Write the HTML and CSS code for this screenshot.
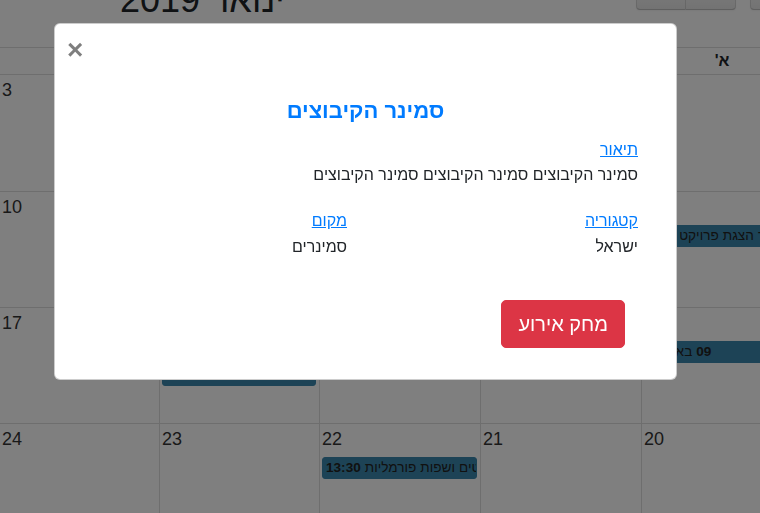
FILE: index.html
```html
<!DOCTYPE html>
<html lang="he">
<head>
<meta charset="utf-8">
<title>לוח אירועים</title>
<link rel="stylesheet" href="styles.css">
</head>
<body>
<div class="page">
  <div class="toolbar">
    <h2 class="cal-title">ינואר 2019</h2>
    <div class="btn-group">
      <button class="fc-btn fc-btn-first"></button><button class="fc-btn fc-btn-last"></button>
    </div>
    <button class="fc-btn fc-btn-single"></button>
  </div>
  <div class="grid">
    <div class="cell head"></div>
    <div class="cell head"></div>
    <div class="cell head"></div>
    <div class="cell head"></div>
    <div class="cell head last" dir="rtl">א'</div>

    <div class="cell"><div class="num">3</div></div>
    <div class="cell"><div class="num">2</div></div>
    <div class="cell"><div class="num">1</div></div>
    <div class="cell"><div class="num">31</div></div>
    <div class="cell last"><div class="num">30</div></div>

    <div class="cell"><div class="num">10</div></div>
    <div class="cell"><div class="num">9</div></div>
    <div class="cell"><div class="num">8</div></div>
    <div class="cell"><div class="num">7</div></div>
    <div class="cell last"><div class="num">6</div>
      <div class="ev"><b>9:30</b><span class="ev-t">פרויקט</span><span class="ev-t">הצגת</span><span class="ev-t">מועד</span></div>
    </div>

    <div class="cell"><div class="num">17</div></div>
    <div class="cell"><div class="num">16</div>
      <div class="ev"><b>10:00</b><span class="ev-t">סדנה</span></div>
      <div class="ev"><b>12:00</b><span class="ev-t">הרצאה</span></div>
    </div>
    <div class="cell"><div class="num">15</div></div>
    <div class="cell"><div class="num">14</div></div>
    <div class="cell last"><div class="num">13</div>
      <div class="ev ev-tight"><span class="ev-t">באנגלית</span><b>09</b></div>
    </div>

    <div class="cell"><div class="num">24</div></div>
    <div class="cell"><div class="num">23</div></div>
    <div class="cell"><div class="num">22</div>
      <div class="ev"><b>13:30</b><span class="ev-t">פורמליות</span><span class="ev-t">ושפות</span><span class="ev-t">אוטומטים</span></div>
    </div>
    <div class="cell"><div class="num">21</div></div>
    <div class="cell last"><div class="num">20</div></div>
  </div>
</div>

<div class="backdrop"></div>

<div class="modal" dir="rtl">
  <div class="modal-header">
    <button class="close" aria-label="סגור">×</button>
  </div>
  <div class="modal-body">
    <h4 class="modal-title">סמינר הקיבוצים</h4>
    <a class="label" href="#">תיאור</a>
    <p class="value desc">סמינר הקיבוצים סמינר הקיבוצים סמינר הקיבוצים</p>
    <div class="fields">
      <div class="field">
        <a class="label" href="#">קטגוריה</a>
        <div class="value">ישראל</div>
      </div>
      <div class="field">
        <a class="label" href="#">מקום</a>
        <div class="value">סמינרים</div>
      </div>
    </div>
  </div>
  <div class="modal-footer">
    <button class="btn-danger">מחק אירוע</button>
  </div>
</div>
</body>
</html>
```

FILE: styles.css
```css
* { box-sizing: border-box; }

html, body {
  margin: 0;
  padding: 0;
}

body {
  width: 760px;
  height: 513px;
  overflow: hidden;
  position: relative;
  background: #fff;
  color: #212529;
  font-family: "Liberation Sans", Arial, "DejaVu Sans", sans-serif;
}

.page {
  width: 802px;
}

/* calendar toolbar */
.toolbar {
  display: flex;
  align-items: flex-start;
  height: 69px;
  margin-top: -22px;
}

.cal-title {
  margin: 0 0 0 120px;
  font-size: 36px;
  font-weight: 400;
  line-height: 43px;
  color: #212529;
}

.btn-group {
  display: flex;
  margin-left: auto;
}

.fc-btn {
  display: block;
  width: 50px;
  height: 32px;
  margin: 0;
  padding: 0;
  background-color: #f5f5f5;
  background-image: linear-gradient(to bottom, #fff, #e6e6e6);
  border: 1px solid rgba(0, 0, 0, 0.1);
  border-bottom-color: rgba(0, 0, 0, 0.25);
  box-shadow: 0 1px 2px rgba(0, 0, 0, 0.05);
}

.fc-btn-first { border-radius: 0 0 0 4px; }
.fc-btn-last { border-radius: 0 0 4px 0; border-left: 0; }

.fc-btn-single {
  width: 52px;
  margin-left: 14px;
  border-radius: 0 0 0 4px;
}

/* month grid */
.grid {
  display: grid;
  grid-template-columns: 160px 160px 161px 161px 160px;
  grid-template-rows: 27px 117px 116px 116px 117px;
}

.cell {
  border-top: 1px solid #ddd;
  border-right: 1px solid #ddd;
  min-width: 0;
  overflow: hidden;
}

.cell.last { border-right: 0; }

.head {
  text-align: center;
  font-size: 16px;
  font-weight: 700;
  line-height: 26px;
  color: #212529;
}

.num {
  padding: 2px 0 0 2px;
  font-size: 18px;
  line-height: 27px;
  color: #333;
}

.ev {
  display: flex;
  direction: ltr;
  height: 22px;
  margin: 4px 3px 0 2px;
  padding: 0 3px;
  background: #3a87ad;
  border: 1px solid #3a87ad;
  border-radius: 3px;
  color: #222;
  font-size: 13.6px;
  line-height: 20px;
  white-space: nowrap;
  overflow: hidden;
}

.ev + .ev { margin-top: 1px; }

.ev-tight { padding-left: 0; }

.ev b {
  flex: none;
  margin-right: 4px;
}

.ev-t {
  flex: none;
  margin-right: 4px;
}

/* modal */
.backdrop {
  position: fixed;
  inset: 0;
  background: rgba(0, 0, 0, 0.5);
}

.modal {
  position: absolute;
  left: 54px;
  top: 23px;
  width: 623px;
  height: 357px;
  background: #fff;
  border: 1px solid rgba(0, 0, 0, 0.2);
  border-radius: 6px;
  color: #212529;
}

.modal-header {
  display: flex;
  justify-content: flex-end;
  height: 38px;
  padding: 13px 12px 0;
}

.close {
  margin: 0;
  padding: 0;
  border: 0;
  background: transparent;
  font-family: "Liberation Sans", Arial, sans-serif;
  font-size: 28px;
  font-weight: 700;
  line-height: 24px;
  color: #000;
  opacity: 0.5;
}

.modal-body {
  padding: 35px 38px 0;
}

.modal-title {
  margin: 0 0 13px;
  text-align: center;
  font-size: 22px;
  font-weight: 700;
  line-height: 28px;
  color: #007bff;
}

.label {
  display: block;
  font-size: 16px;
  line-height: 24px;
  color: #007bff;
  text-decoration: underline;
}

.value {
  font-size: 16px;
  line-height: 24px;
  color: #212529;
}

.desc {
  margin: 1px 0 22px;
}

.fields {
  display: grid;
  grid-template-columns: 1fr 1fr;
  column-gap: 37px;
}

.field .value { margin-top: 2px; }

.modal-footer {
  display: flex;
  justify-content: flex-start;
  padding: 41px 51px 0;
}

.btn-danger {
  height: 48px;
  padding: 8px 16px;
  background: #dc3545;
  border: 1px solid #dc3545;
  border-radius: 5px;
  color: #fff;
  font-family: "Liberation Sans", Arial, sans-serif;
  font-size: 20px;
  line-height: 30px;
}
```
